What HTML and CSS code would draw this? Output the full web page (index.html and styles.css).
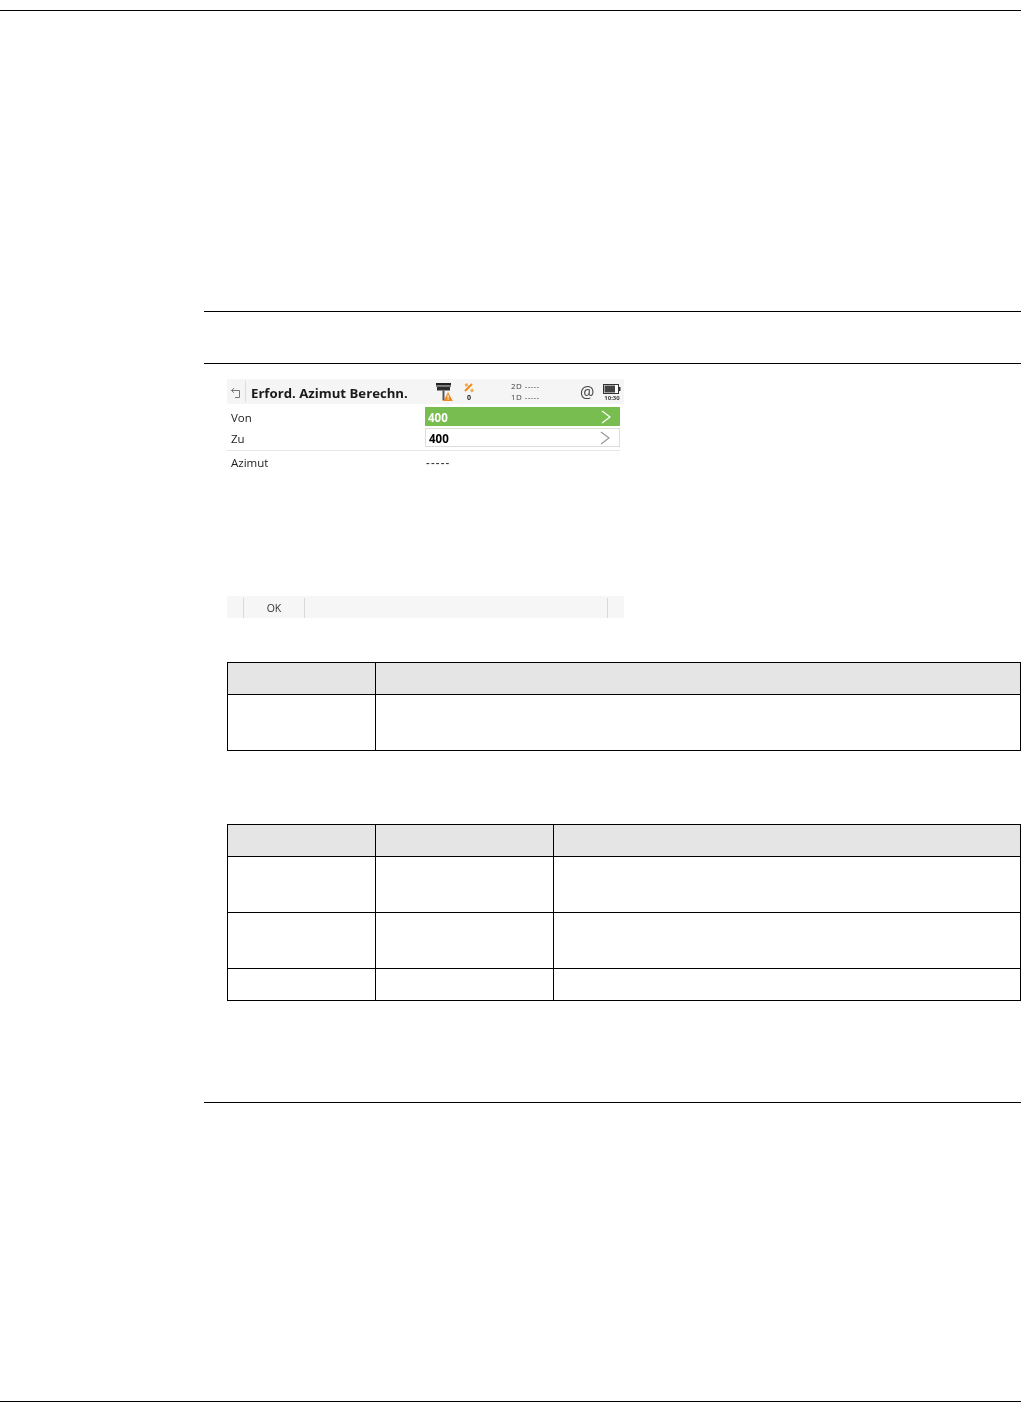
FILE: index.html
```html
<!DOCTYPE html>
<html lang="de">
	<head>
		<title>Erford. Azimut Berechn.</title>
		<meta charset="utf-8" name="viewport" content="width=device-width, initial-scale=1">
		<link rel="stylesheet" href="styles.css">
	</head>
	<body>
		<div class="page">
			<hr class="rule top-rule">
			<div class="content">
				<hr class="rule">
				<hr class="rule second-rule">

				<!-- Instrument screen -->
				<div class="screen">
					<div class="titlebar">
						<svg class="back-icon" viewBox="0 0 12 12" width="12" height="12"><path d="M1.5 3.5H9.5V10.5H5M1.5 3.5L4 1.2M1.5 3.5L4 5.8" fill="none" stroke="#777" stroke-width="1"/></svg>
						<span class="sep"></span>
						<span class="screen-title">Erford. Azimut Berechn.</span>
						<div class="status">
							<svg class="status-gps" viewBox="0 0 18 20" width="18" height="20">
								<path d="M0 1H15V3.5H0Z" fill="#222"/>
								<path d="M0 3.5H15V5H0Z" fill="#777"/>
								<path d="M1 5H14V8.5H1Z" fill="#2c2c2c"/>
								<path d="M6.5 8.5H8.5V18.5H6.5Z" fill="#555"/>
								<path d="M12 10L16.8 19H7.8Z" fill="#f08a1d"/>
								<path d="M11.6 13H12.6V16.2H11.6ZM11.6 16.8H12.6V17.8H11.6Z" fill="#fff"/>
							</svg>
							<div class="status-sat">
								<svg viewBox="0 0 12 12" width="12" height="12">
									<path d="M2 9L9 2" stroke="#f08a1d" stroke-width="2"/>
									<path d="M1.5 2.5L4 1L5.5 3.5L3 5ZM7 8L9.5 6.5L11 9L8.5 10.5Z" fill="#f4a94e"/>
								</svg>
								<span>0</span>
							</div>
							<div class="status-dim">
								<span>2D -----</span>
								<span>1D -----</span>
							</div>
							<span class="status-at">@</span>
							<div class="status-batt">
								<svg viewBox="0 0 18 10" width="18" height="10">
									<rect x="0.5" y="0.5" width="15" height="9" fill="#fff" stroke="#333"/>
									<rect x="1.5" y="1.5" width="10.5" height="7" fill="#444"/>
									<rect x="16" y="3" width="1.5" height="4" fill="#333"/>
								</svg>
								<span>10:30</span>
							</div>
						</div>
					</div>
					<div class="field-row">
						<span class="field-label">Von</span>
						<div class="field field-active">
							<span>400</span>
							<svg viewBox="0 0 12 14" width="12" height="14"><path d="M2 1L10 7L2 13" fill="none" stroke="#fff" stroke-width="1.2"/></svg>
						</div>
					</div>
					<div class="field-row">
						<span class="field-label">Zu</span>
						<div class="field">
							<span>400</span>
							<svg viewBox="0 0 12 14" width="12" height="14"><path d="M2 1L10 7L2 13" fill="none" stroke="#999" stroke-width="1.2"/></svg>
						</div>
					</div>
					<div class="divider"></div>
					<div class="value-row">
						<span class="field-label">Azimut</span>
						<span class="value">-----</span>
					</div>
					<div class="softkeys">
						<span class="softkey-gap"></span>
						<span class="softkey">OK</span>
						<span class="softkey softkey-wide"></span>
					</div>
				</div>

				<table class="grid grid-one">
					<tr class="head"><td class="col-a"></td><td></td></tr>
					<tr class="tall"><td></td><td></td></tr>
				</table>

				<table class="grid grid-two">
					<tr class="head"><td class="col-a"></td><td class="col-b"></td><td></td></tr>
					<tr class="tall"><td></td><td></td><td></td></tr>
					<tr class="tall"><td></td><td></td><td></td></tr>
					<tr class="short"><td></td><td></td><td></td></tr>
				</table>

				<hr class="rule end-rule">
			</div>
			<hr class="rule bottom-rule">
		</div>
	</body>
</html>
```

FILE: styles.css
```css
* {box-sizing: border-box}

body, html {
	margin: 0;
	background-color: white;
	font-family: "Open Sans", "Noto Sans", sans-serif;
	color: #222;
}

.page {
	width: 1021px;
	height: 1402px;
	padding-top: 10px;
	overflow: hidden;
}

/* Black page rules */
.rule {
	height: 1px;
	margin: 0;
	border: none;
	background-color: black;
}

.content {
	margin-top: 300px;
	padding-left: 204px;
}

.second-rule {
	margin-top: 51px;
}

.end-rule {
	margin-top: 101px;
}

.bottom-rule {
	margin-top: 298px;
}

/* Instrument screen, the original is a scaled up photo so it is a bit soft */
.screen {
	width: 397px;
	height: 239px;
	margin: 15px 0 0 23px;
	display: flex;
	flex-direction: column;
	filter: blur(0.3px);
}

.titlebar {
	height: 25px;
	margin-bottom: 2px;
	padding-left: 3px;
	display: flex;
	align-items: center;
	background-color: #f5f5f5;
}

.back-icon {
	flex: none;
	margin-top: 2px;
}

.sep {
	width: 1px;
	height: 21px;
	margin: 0 5px 0 3px;
	background-color: #ddd;
}

.screen-title {
	flex: none;
	width: 180px;
	padding-top: 3px;
	font-size: 13.2px;
	font-weight: 700;
	color: #1a1a1a;
	white-space: nowrap;
}

/* Status icons sit on fixed spots in the bar */
.status {
	flex: 1;
	height: 100%;
	position: relative;
}

.status > * {
	position: absolute;
}

.status-gps {
	left: 5px;
	top: 3px;
}

.status-sat {
	left: 32px;
	top: 3px;
	width: 12px;
	display: flex;
	flex-direction: column;
	align-items: center;
	font-size: 7px;
	font-weight: 700;
	line-height: 8px;
}

.status-dim {
	left: 80px;
	top: 1px;
	display: flex;
	flex-direction: column;
	font-size: 8px;
	letter-spacing: 0.4px;
	line-height: 11px;
	color: #444;
	white-space: nowrap;
}

.status-at {
	left: 149px;
	top: 2px;
	font-size: 16px;
	line-height: 22px;
	color: #444;
}

.status-batt {
	left: 172px;
	top: 5px;
	display: flex;
	flex-direction: column;
	align-items: center;
	font-size: 6px;
	font-weight: 700;
	line-height: 9px;
	color: #444;
}

.field-row {
	height: 21px;
	display: flex;
	align-items: center;
}

.field-label {
	width: 198px;
	padding: 1px 0 0 4px;
	font-size: 11.5px;
	color: #222;
}

.field {
	width: 195px;
	height: 19px;
	padding: 1px 8px 0 3px;
	display: flex;
	align-items: center;
	justify-content: space-between;
	border: 1px solid #ddd;
	font-size: 11.5px;
	font-weight: 700;
	color: black;
}

.field svg {
	margin-top: -1px;
}

.field-active {
	border: none;
	background-color: #77bd4f;
	color: white;
}

.divider {
	width: 393px;
	height: 1px;
	margin-top: 2px;
	background-color: #e6e6e6;
}

.value-row {
	margin-top: 3px;
	height: 16px;
	display: flex;
	align-items: center;
}

.value {
	padding-left: 1px;
	font-size: 11.5px;
	font-weight: 600;
	letter-spacing: 1.2px;
	color: #333;
}

.softkeys {
	margin-top: auto;
	height: 22px;
	padding-top: 2px;
	display: flex;
	background-color: #f6f6f6;
}

.softkey-gap {
	width: 16px;
}

.softkey {
	width: 61px;
	border-left: 1px solid #d8d8d8;
	text-align: center;
	font-size: 10.5px;
	line-height: 20px;
	color: #333;
}

.softkey-wide {
	width: 304px;
	border-right: 1px solid #d8d8d8;
}

/* Empty tables */
.grid {
	width: 794px;
	margin-left: 23px;
	table-layout: fixed;
	border-collapse: collapse;
}

.grid td {
	padding: 0;
	border: 1px solid black;
}

.grid-one {
	margin-top: 44px;
}

.grid-two {
	margin-top: 73px;
}

.col-a {
	width: 148px;
}

.col-b {
	width: 178px;
}

.head {
	height: 32px;
}

.head td {
	background-color: #e5e5e5;
}

.tall {
	height: 56px;
}

.short {
	height: 32px;
}
```
